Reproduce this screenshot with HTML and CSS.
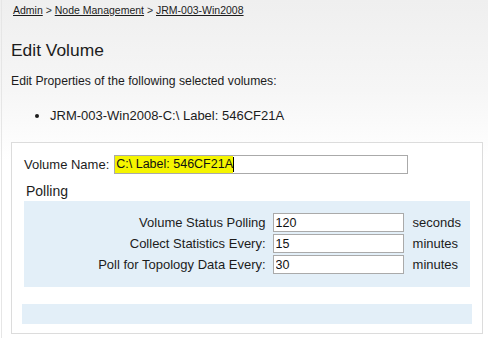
FILE: index.html
```html
<!DOCTYPE html>
<html lang="en">
<head>
    <meta charset="UTF-8">
    <meta name="viewport" content="width=device-width, initial-scale=1.0">
    <title>Edit Volume</title>
    <link rel="stylesheet" href="styles.css">
</head>
<body>
    <div class="page">
        <div class="breadcrumb">
            <a href="#">Admin</a> &gt; <a href="#">Node Management</a> &gt; <a href="#">JRM-003-Win2008</a>
        </div>

        <h1>Edit Volume</h1>
        <p class="intro">Edit Properties of the following selected volumes:</p>
        <ul class="volume-list">
            <li>JRM-003-Win2008-C:\ Label: 546CF21A</li>
        </ul>

        <div class="edit-panel">
            <div class="name-row">
                <label>Volume Name:</label>
                <!-- text is shown selected, so a span stands in for the input value -->
                <div class="text-field name-field"><span class="selected">C:\ Label: 546CF21A</span><span class="caret"></span></div>
            </div>

            <div class="section-title">Polling</div>
            <div class="polling-box">
                <label>Volume Status Polling</label>
                <input class="text-field" type="text" value="120">
                <span class="unit">seconds</span>

                <label>Collect Statistics Every:</label>
                <input class="text-field" type="text" value="15">
                <span class="unit">minutes</span>

                <label>Poll for Topology Data Every:</label>
                <input class="text-field" type="text" value="30">
                <span class="unit">minutes</span>
            </div>

            <div class="button-bar"></div>
        </div>
    </div>
</body>
</html>
```

FILE: styles.css
```css
html {
    background: linear-gradient(#efefef 0px, #f6f6f6 90px, #ffffff 160px);
    min-height: 100%;
}

body {
    font-family: "Liberation Sans", Arial, sans-serif;
    color: #1c1c1c;
    margin: 0;
    padding: 0;
}

.page {
    margin-left: 1px;
    border-left: 1px solid #e6e6e6;
    padding: 0 5px 0 9px;
    min-height: 338px;
    box-sizing: border-box;
}

.breadcrumb {
    padding-top: 4px;
    font-size: 10.5px;
    line-height: 13px;
    color: #333;
    padding-left: 2px;
}

.breadcrumb a {
    color: #1c1c1c;
    text-decoration: underline;
}

h1 {
    font-size: 17.4px;
    font-weight: normal;
    line-height: 20px;
    margin: 23px 0 0 0;
}

.intro {
    font-size: 12.2px;
    line-height: 14px;
    margin: 14px 0 0 0;
}

.volume-list {
    font-size: 13px;
    line-height: 15px;
    margin: 20px 0 0 0;
    padding-left: 39px;
}

.edit-panel {
    margin-top: 19px;
    background-color: #ffffff;
    border: 1px solid #dcdcdc;
    padding: 12px 10px 9px 10px;
}

.name-row {
    display: flex;
    align-items: center;
    padding-left: 2px;
    font-size: 13px;
}

.name-row label {
    margin-right: 5px;
}

.text-field {
    font-family: "Liberation Sans", Arial, sans-serif;
    font-size: 12.5px;
    color: #111;
    height: 19px;
    box-sizing: border-box;
    border: 1px solid #aaaaaa;
    background-color: #fff;
    padding: 0 2px;
    margin: 0;
    outline: none;
}

.name-field {
    width: 294px;
    display: flex;
    align-items: center;
    padding: 0;
}

.selected {
    background-color: #f5f500;
    line-height: 17px;
    padding-left: 1px;
}

.caret {
    display: inline-block;
    width: 1px;
    height: 15px;
    background-color: #000;
}

.section-title {
    font-size: 14px;
    line-height: 15px;
    margin: 10px 0 0 4px;
}

.polling-box {
    margin: 2px 2px 0 2px;
    background-color: #e3eff8;
    padding: 12px 9px 13px 0;
    display: grid;
    grid-template-columns: 1fr 131px auto;
    row-gap: 2px;
    align-items: center;
    font-size: 13px;
}

.polling-box label {
    text-align: right;
    padding-right: 7px;
}

.polling-box .text-field {
    width: 131px;
}

.unit {
    padding-left: 9px;
}

.button-bar {
    margin-top: 17px;
    height: 20px;
    background-color: #e3eff8;
}
```
